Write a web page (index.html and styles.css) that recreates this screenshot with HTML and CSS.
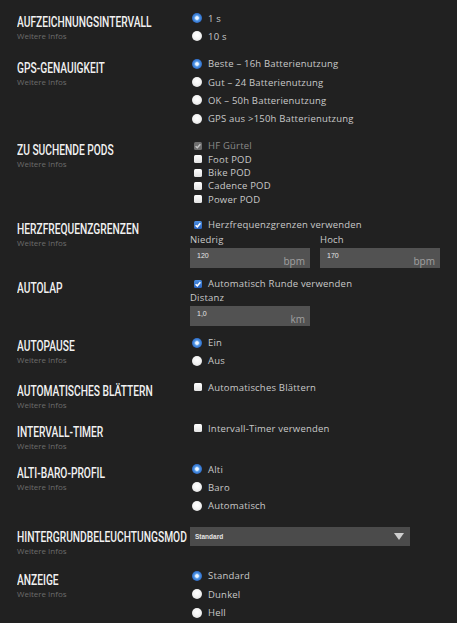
FILE: index.html
```html
<!DOCTYPE html>
<html lang="de">
<head>
<meta charset="utf-8">
<title>Einstellungen</title>
<link rel="stylesheet" href="styles.css">
</head>
<body>
<div class="settings">

  <section class="section">
    <div class="head"><h2 class="title"><span>Aufzeichnungsintervall</span></h2><p class="info">Weitere Infos</p></div>
    <div class="ctrl">
      <div class="opt"><span class="radio on"></span><span>1 s</span></div>
      <div class="opt"><span class="radio"></span><span>10 s</span></div>
    </div>
  </section>

  <section class="section">
    <div class="head"><h2 class="title"><span>GPS-Genauigkeit</span></h2><p class="info">Weitere Infos</p></div>
    <div class="ctrl">
      <div class="opt"><span class="radio on"></span><span>Beste – 16h Batterienutzung</span></div>
      <div class="opt"><span class="radio"></span><span>Gut – 24 Batterienutzung</span></div>
      <div class="opt"><span class="radio"></span><span>OK – 50h Batterienutzung</span></div>
      <div class="opt"><span class="radio"></span><span>GPS aus &gt;150h Batterienutzung</span></div>
    </div>
  </section>

  <section class="section gap-l">
    <div class="head"><h2 class="title"><span>Zu suchende Pods</span></h2><p class="info">Weitere Infos</p></div>
    <div class="ctrl checks">
      <div class="chk disabled"><span class="box dis"><svg viewBox="0 0 8 8"><path d="M1.6 4.2 3.3 5.8 6.4 2.2" fill="none" stroke="#c4c4c4" stroke-width="1.4"/></svg></span><span>HF Gürtel</span></div>
      <div class="chk"><span class="box"></span><span>Foot POD</span></div>
      <div class="chk"><span class="box"></span><span>Bike POD</span></div>
      <div class="chk"><span class="box"></span><span>Cadence POD</span></div>
      <div class="chk"><span class="box"></span><span>Power POD</span></div>
    </div>
  </section>

  <section class="section gap-s">
    <div class="head"><h2 class="title"><span>Herzfrequenzgrenzen</span></h2><p class="info">Weitere Infos</p></div>
    <div class="ctrl checks">
      <div class="chk"><span class="box on"><svg viewBox="0 0 8 8"><path d="M1.6 4.2 3.3 5.8 6.4 2.2" fill="none" stroke="#fff" stroke-width="1.5"/></svg></span><span>Herzfrequenzgrenzen verwenden</span></div>
      <div class="pair">
        <div class="group">
          <div class="flabel">Niedrig</div>
          <div class="field"><span class="val">120</span><span class="unit">bpm</span></div>
        </div>
        <div class="group">
          <div class="flabel">Hoch</div>
          <div class="field"><span class="val">170</span><span class="unit">bpm</span></div>
        </div>
      </div>
    </div>
  </section>

  <section class="section gap-s">
    <div class="head"><h2 class="title"><span>Autolap</span></h2></div>
    <div class="ctrl checks">
      <div class="chk"><span class="box on"><svg viewBox="0 0 8 8"><path d="M1.6 4.2 3.3 5.8 6.4 2.2" fill="none" stroke="#fff" stroke-width="1.5"/></svg></span><span>Automatisch Runde verwenden</span></div>
      <div class="group">
        <div class="flabel">Distanz</div>
        <div class="field"><span class="val">1,0</span><span class="unit">km</span></div>
      </div>
    </div>
  </section>

  <section class="section gap-m">
    <div class="head"><h2 class="title"><span>Autopause</span></h2><p class="info">Weitere Infos</p></div>
    <div class="ctrl">
      <div class="opt"><span class="radio on"></span><span>Ein</span></div>
      <div class="opt"><span class="radio"></span><span>Aus</span></div>
    </div>
  </section>

  <section class="section">
    <div class="head"><h2 class="title"><span>Automatisches Blättern</span></h2><p class="info">Weitere Infos</p></div>
    <div class="ctrl checks">
      <div class="chk"><span class="box"></span><span>Automatisches Blättern</span></div>
    </div>
  </section>

  <section class="section">
    <div class="head"><h2 class="title"><span>Intervall-Timer</span></h2><p class="info">Weitere Infos</p></div>
    <div class="ctrl checks">
      <div class="chk"><span class="box"></span><span>Intervall-Timer verwenden</span></div>
    </div>
  </section>

  <section class="section">
    <div class="head"><h2 class="title"><span>Alti-Baro-Profil</span></h2><p class="info">Weitere Infos</p></div>
    <div class="ctrl">
      <div class="opt"><span class="radio on"></span><span>Alti</span></div>
      <div class="opt"><span class="radio"></span><span>Baro</span></div>
      <div class="opt"><span class="radio"></span><span>Automatisch</span></div>
    </div>
  </section>

  <section class="section gap-xl">
    <div class="head"><h2 class="title"><span>Hintergrundbeleuchtungsmod</span></h2><p class="info">Weitere Infos</p></div>
    <div class="ctrl">
      <div class="select"><span>Standard</span><svg class="caret" viewBox="0 0 10 7"><path d="M0 0H10L5 7Z" fill="#cfcfcf"/></svg></div>
    </div>
  </section>

  <section class="section">
    <div class="head"><h2 class="title"><span>Anzeige</span></h2><p class="info">Weitere Infos</p></div>
    <div class="ctrl">
      <div class="opt"><span class="radio on"></span><span>Standard</span></div>
      <div class="opt"><span class="radio"></span><span>Dunkel</span></div>
      <div class="opt"><span class="radio"></span><span>Hell</span></div>
    </div>
  </section>

</div>
</body>
</html>
```

FILE: styles.css
```css
html, body {
  margin: 0;
  background: #212121;
}

body {
  font-family: "Open Sans", "DejaVu Sans", sans-serif;
  overflow: hidden;
}

.settings {
  padding: 9px 0 0 17px;
}

.section {
  display: grid;
  grid-template-columns: 173px 1fr;
  margin-bottom: 9px;
}

.section.gap-l {
  margin-bottom: 10px;
}

.section.gap-s {
  margin-bottom: 7px;
}

.section.gap-m {
  margin-bottom: 8px;
}

.section.gap-xl {
  margin-bottom: 11px;
}

.head {
  padding-top: 4px;
}

.title {
  margin: 0;
  font-family: Roboto, "DejaVu Sans Condensed", sans-serif;
  font-weight: 500;
  font-size: 15.5px;
  line-height: 18px;
  color: #f1f1f1;
  text-transform: uppercase;
  white-space: nowrap;
}

.title span {
  display: inline-block;
  transform: scaleX(0.66);
  transform-origin: 0 50%;
}

.info {
  margin: 0;
  font-size: 8px;
  line-height: 10px;
  color: #6c6c6c;
}

.ctrl {
  display: flex;
  flex-direction: column;
}

.opt {
  display: flex;
  align-items: center;
  height: 18.3px;
  gap: 6px;
  padding-left: 2px;
  font-size: 9.5px;
  color: #c9c9c9;
  letter-spacing: 0.2px;
}

.radio {
  flex: none;
  width: 10px;
  height: 10px;
  border-radius: 50%;
  background: radial-gradient(circle at 50% 40%, #ffffff 0, #f2f2f2 50%, #d4d4d4 100%);
}

.radio.on {
  background: radial-gradient(circle, #eef5ff 0 1.4px, #8ec0f5 2px, #4a8fe0 3px, #2e6cc8 5px);
}

.checks {
  padding-top: 2.5px;
}

.chk {
  display: flex;
  align-items: center;
  height: 13.3px;
  gap: 6.5px;
  padding-left: 3.5px;
  font-size: 9.5px;
  color: #c9c9c9;
  letter-spacing: 0.2px;
}

.chk.disabled {
  color: #8a8a8a;
}

.box {
  flex: none;
  display: flex;
  width: 8px;
  height: 8px;
  border-radius: 1.5px;
  background: linear-gradient(#ffffff, #e2e2e2);
}

.box svg {
  width: 8px;
  height: 8px;
}

.box.on {
  background: linear-gradient(#4a8ee2, #2a63bf);
}

.box.dis {
  background: #6e6e6e;
}

.pair {
  display: flex;
  gap: 10px;
}

.flabel {
  font-size: 9.5px;
  line-height: 15px;
  color: #c9c9c9;
  letter-spacing: 0.2px;
}

.field {
  display: flex;
  justify-content: space-between;
  box-sizing: border-box;
  width: 120px;
  height: 20px;
  margin-top: 1px;
  padding: 3px 5px 0 7px;
  background: #525252;
}

.val {
  font-family: "Liberation Sans", Arial, sans-serif;
  font-size: 7px;
  line-height: 10px;
  color: #e6e6e6;
}

.unit {
  align-self: flex-end;
  font-size: 10px;
  line-height: 14px;
  color: #a0a0a0;
}

.select {
  display: flex;
  align-items: center;
  justify-content: space-between;
  box-sizing: border-box;
  width: 220px;
  height: 19px;
  margin-top: 3.5px;
  padding: 0 6px 0 5px;
  background: #4b4b4b;
  font-family: "Liberation Sans", Arial, sans-serif;
  font-weight: 700;
  font-size: 6.5px;
  color: #e4e4e4;
}

.caret {
  width: 10px;
  height: 7px;
}
```
